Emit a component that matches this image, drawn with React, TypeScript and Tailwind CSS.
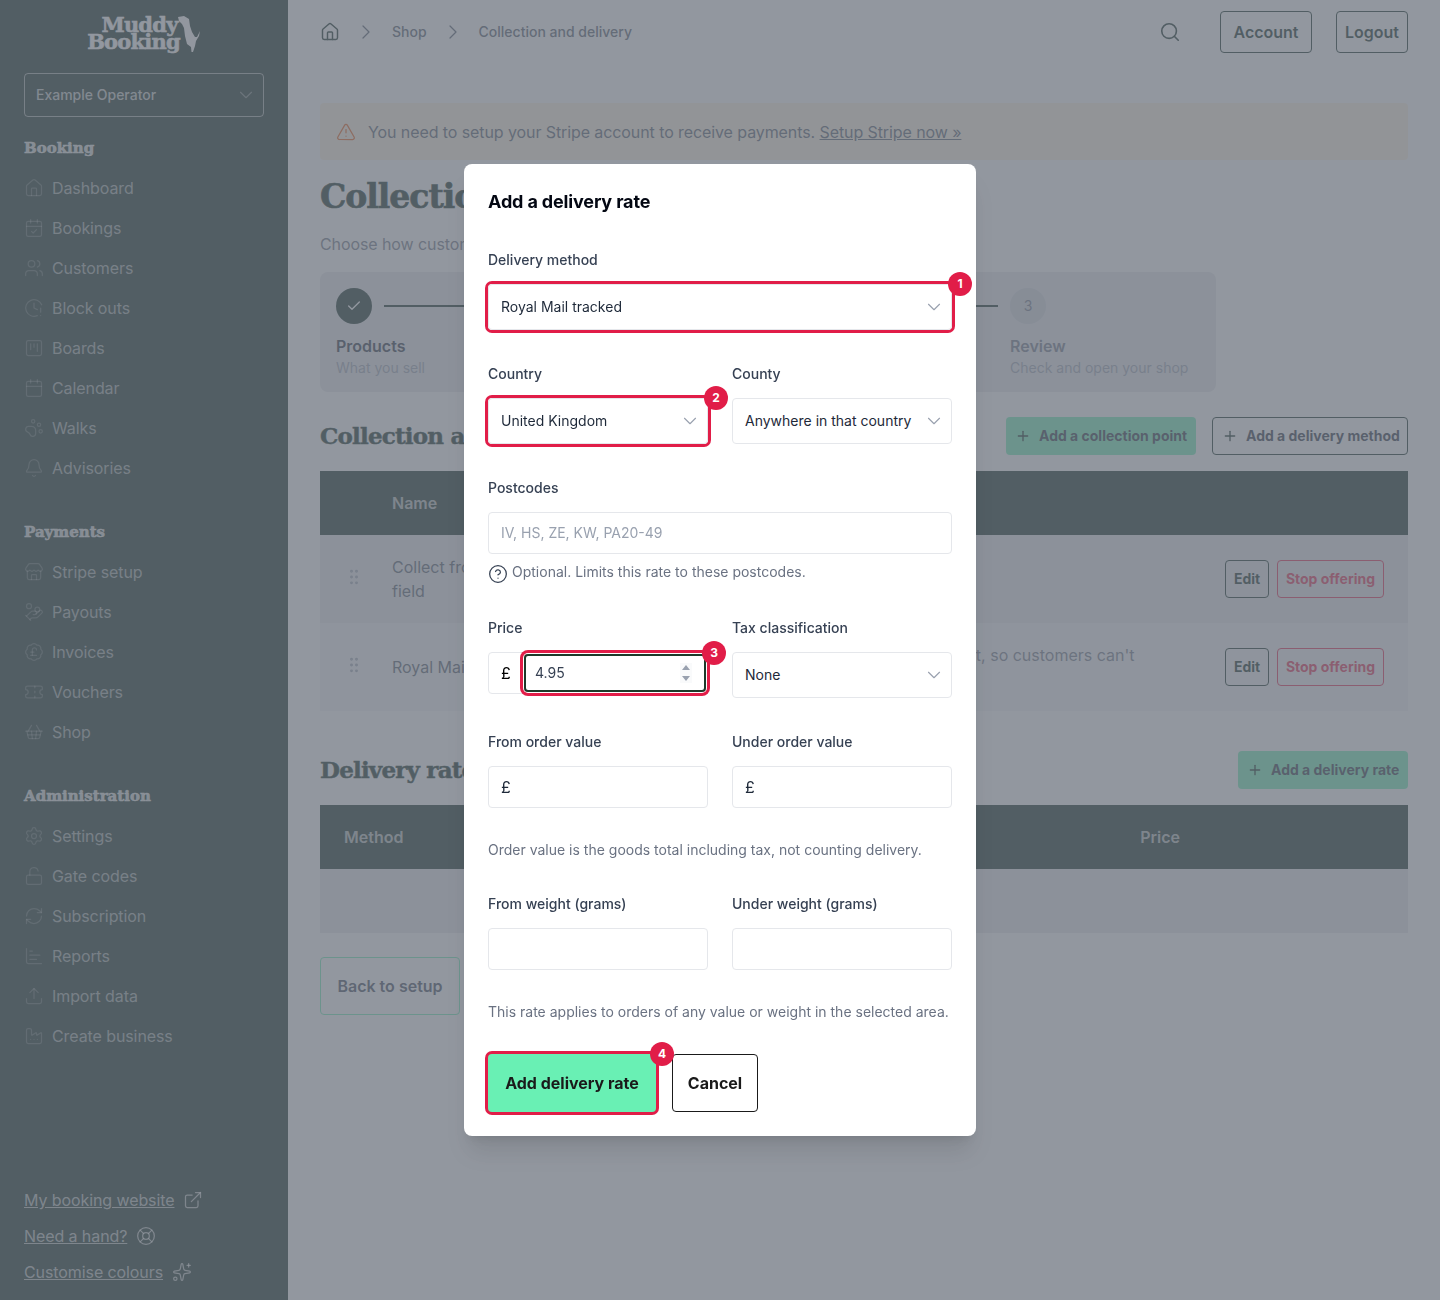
import React from "react";
import {
  House, CalendarCheck, Users, ClockAlert, SquareKanban, Calendar, PawPrint, Bell, Store, HandCoins,
  BadgePoundSterling, Ticket, ShoppingBasket, Settings, LockOpen, RefreshCw, ChartBar, Upload, Factory,
  ExternalLink, LifeBuoy, Sparkles, ChevronDown, ChevronRight, Search, TriangleAlert, Check,
  Plus, GripVertical, CircleHelp,
} from "lucide-react";

const booking = [
  { label: "Dashboard", icon: House },
  { label: "Bookings", icon: CalendarCheck },
  { label: "Customers", icon: Users },
  { label: "Block outs", icon: ClockAlert },
  { label: "Boards", icon: SquareKanban },
  { label: "Calendar", icon: Calendar },
  { label: "Walks", icon: PawPrint },
  { label: "Advisories", icon: Bell },
];
const payments = [
  { label: "Stripe setup", icon: Store },
  { label: "Payouts", icon: HandCoins },
  { label: "Invoices", icon: BadgePoundSterling },
  { label: "Vouchers", icon: Ticket },
  { label: "Shop", icon: ShoppingBasket },
];
const administration = [
  { label: "Settings", icon: Settings },
  { label: "Gate codes", icon: LockOpen },
  { label: "Subscription", icon: RefreshCw },
  { label: "Reports", icon: ChartBar },
  { label: "Import data", icon: Upload },
  { label: "Create business", icon: Factory },
];

const NavSection = ({ title, items, className = "" }: { title: string; items: typeof booking; className?: string }) => (
  <div className={className}>
    <h3 className="font-['DejaVu_Serif',serif] font-bold text-[15px] leading-6 h-6 mb-2 text-white/80 [-webkit-text-stroke:0.5px_currentColor]">{title}</h3>
    <ul>
      {items.map(({ label, icon: Icon }) => (
        <li key={label} className="flex items-center gap-2 h-10 text-white/60 tracking-[-0.09px]">
          <Icon size={20} strokeWidth={1.5} className="text-white/25" />
          <span>{label}</span>
        </li>
      ))}
    </ul>
  </div>
);

const Sidebar = () => (
  <aside className="w-72 shrink-0 bg-[#001c14] flex flex-col px-6 pb-4">
    <div className="h-[73px] flex justify-center">
      <div className="mt-4 font-['DejaVu_Serif',serif] font-bold text-white text-[21px] leading-[17px] text-center tracking-[-0.8px] [-webkit-text-stroke:0.5px_currentColor]">
        <div className="pl-[12px]">Muddy</div>
        <div>Booking</div>
      </div>
      <svg viewBox="0 0 24 36" className="w-6 h-9 mt-4 -ml-[3px] fill-white">
        <path d="M1 1 L7 0 L12 3 L13 10 L15 16 L18 21 L20 21 L23 15 L22 20 L19 25 L18 30 L16 36 L14.5 36 L14 31 L10 28 L8 20 L7 12 L5 8 L2 5 Z" />
      </svg>
    </div>
    <div className="h-11 border border-white/60 rounded flex items-center justify-between pl-[11px] pr-[6px] text-sm font-medium text-white/75">
      Example Operator
      <ChevronDown size={22} strokeWidth={1.25} className="text-white/40" />
    </div>
    <NavSection title="Booking" items={booking} className="mt-[19px]" />
    <NavSection title="Payments" items={payments} className="mt-8" />
    <NavSection title="Administration" items={administration} className="mt-8" />
    <div className="mt-auto flex flex-col gap-3 text-white/70 tracking-[-0.09px]">
      <a className="flex items-center gap-[9px] h-6"><span className="underline">My booking website</span><ExternalLink size={20} strokeWidth={1.5} /></a>
      <a className="flex items-center gap-[9px] h-6"><span className="underline">Need a hand?</span><LifeBuoy size={20} strokeWidth={1.5} /></a>
      <a className="flex items-center gap-[9px] h-6"><span className="underline">Customise colours</span><Sparkles size={20} strokeWidth={1.5} /></a>
    </div>
  </aside>
);

const Step = ({ title, text, number, last }: { title: string; text: string; number?: number; last?: boolean }) => (
  <div className={last ? "w-[190px]" : "flex-1"}>
    <div className="flex items-center gap-3">
      {number ? (
        <div className="w-9 h-9 rounded-full bg-gray-300 flex items-center justify-center text-sm text-gray-500">{number}</div>
      ) : (
        <div className="w-9 h-9 rounded-full bg-[#001c14] flex items-center justify-center text-white"><Check size={16} /></div>
      )}
      {!last && <div className="flex-1 h-0.5 bg-[#001c14] mr-3" />}
    </div>
    <div className={`mt-[10px] font-semibold leading-6 ${number ? "text-gray-500" : "text-gray-800"}`}>{title}</div>
    <div className="text-sm leading-5 text-gray-400">{text}</div>
  </div>
);

const RowButtons = () => (
  <div className="flex gap-2 text-sm font-bold">
    <button className="h-[38px] w-11 border border-[#001c14] rounded text-[#001c14]">Edit</button>
    <button className="h-[38px] w-[107px] border border-[#e11d48] rounded text-[#e11d48] whitespace-nowrap">Stop offering</button>
  </div>
);

const AddButton = ({ label, outline, width }: { label: string; outline?: boolean; width: string }) => (
  <button className={`h-[38px] ${width} flex items-center gap-2 px-[9px] rounded text-sm font-bold whitespace-nowrap text-gray-800 ${outline ? "border border-[#001c14]" : "bg-[#69f0b4]"}`}>
    <Plus size={16} className="text-[#001c14] shrink-0" /> {label}
  </button>
);

const Page = () => (
  <main className="flex-1 px-8 pt-[11px] bg-white">
    <header className="h-[42px] flex items-center">
      <div className="flex items-center gap-[14px] text-sm font-medium text-gray-600">
        <House size={20} strokeWidth={1.75} className="text-[#001c14]" />
        <ChevronRight size={24} strokeWidth={1.25} />
        <span>Shop</span>
        <ChevronRight size={24} strokeWidth={1.25} />
        <span>Collection and delivery</span>
      </div>
      <div className="ml-auto flex items-center font-semibold text-[#001c14]">
        <Search size={22} strokeWidth={1.75} className="mr-[39px]" />
        <button className="h-[42px] w-[92px] border border-[#001c14] rounded mr-6">Account</button>
        <button className="h-[42px] w-[72px] border border-[#001c14] rounded">Logout</button>
      </div>
    </header>
    <div className="mt-[50px] h-[57px] flex items-center gap-3 px-4 rounded bg-[#fff3e0] text-gray-600 tracking-[-0.09px]">
      <TriangleAlert size={20} strokeWidth={1.5} className="text-[#ea580c]" />
      <p>You need to setup your Stripe account to receive payments. <a className="underline">Setup Stripe now »</a></p>
    </div>
    <h1 className="mt-[17px] font-['DejaVu_Serif',serif] font-bold text-[33px] leading-10 tracking-[-1px] text-[#001c14] [-webkit-text-stroke:0.7px_currentColor]">Collection and delivery</h1>
    <p className="mt-[15px] leading-6 text-gray-500 tracking-[-0.09px]">Choose how customers get their orders from your shop.</p>
    <div className="mt-4 w-[896px] h-[120px] p-4 flex rounded-lg bg-gray-200">
      <Step title="Products" text="What you sell" />
      <Step title="Collection and delivery" text="How orders reach customers" number={2} />
      <Step title="Review" text="Check and open your shop" number={3} last />
    </div>
    <div className="mt-[25px] flex items-center justify-between">
      <h2 className="font-['DejaVu_Serif',serif] font-bold text-[23px] tracking-[-0.8px] text-[#001c14] [-webkit-text-stroke:0.5px_currentColor]">Collection and delivery</h2>
      <div className="flex gap-4">
        <AddButton label="Add a collection point" width="w-[190px]" />
        <AddButton label="Add a delivery method" outline width="w-[196px]" />
      </div>
    </div>
    <div className="mt-4">
      <div className="h-16 bg-[#001c14] flex items-center pl-[72px] font-semibold text-white/70">Name</div>
      <div className="h-[88px] bg-gray-200 flex items-center pl-6 pr-6 text-gray-600">
        <GripVertical size={20} strokeWidth={1.5} className="text-gray-400 -mt-1 mr-7" />
        <div className="w-[152px] leading-6">Collect from the field</div>
        <div className="ml-auto"><RowButtons /></div>
      </div>
      <div className="h-[88px] bg-gray-100 flex items-center pl-6 pr-6 text-gray-600">
        <GripVertical size={20} strokeWidth={1.5} className="text-gray-400 -mt-1 mr-7" />
        <div className="w-[152px] leading-6">Royal Mail tracked</div>
        <div className="ml-[131px] w-[470px] leading-6 text-gray-500">We post it out the day after you accept it, so customers can't<br />collect</div>
        <div className="ml-auto"><RowButtons /></div>
      </div>
    </div>
    <div className="mt-10 flex items-center justify-between">
      <h2 className="font-['DejaVu_Serif',serif] font-bold text-[23px] tracking-[-0.8px] text-[#001c14] [-webkit-text-stroke:0.5px_currentColor]">Delivery rates</h2>
      <AddButton label="Add a delivery rate" width="w-[170px]" />
    </div>
    <div className="mt-4">
      <div className="h-16 bg-[#001c14] flex items-center justify-between pl-6 pr-[228px] font-semibold text-white/70">
        <span>Method</span>
        <span>Price</span>
      </div>
      <div className="h-16 bg-gray-200" />
    </div>
    <button className="mt-6 h-[58px] w-[140px] border border-[#69f0b4] rounded font-semibold text-gray-700">Back to setup</button>
  </main>
);

const Badge = ({ n, className }: { n: number; className: string }) => (
  <span className={`absolute w-6 h-6 rounded-full bg-[#e11d48] text-white text-xs font-bold flex items-center justify-center ${className}`}>{n}</span>
);

const Label = ({ children }: { children: React.ReactNode }) => (
  <label className="block mb-[14px] text-sm leading-5 font-medium text-gray-700">{children}</label>
);

const fieldCls = "w-full border border-gray-200 rounded bg-white text-sm text-gray-800 px-3";

const Select = ({ value, children }: { value: string; children?: React.ReactNode }) => (
  <div className="relative h-[46px]">
    <select defaultValue={value} className={`${fieldCls} h-[46px] appearance-none`}>
      <option>{value}</option>
    </select>
    <ChevronDown size={22} strokeWidth={1.25} className="absolute right-[7px] top-3 text-gray-400" />
    {children}
  </div>
);

const Highlight = "ring-[3px] ring-[#e11d48] rounded";

const Pound = () => (
  <div className="w-full h-[42px] flex items-center border border-gray-200 rounded bg-white text-base text-gray-800 px-3">£</div>
);

const Modal = () => (
  <div className="fixed inset-0 bg-[#6e747f]/75 flex items-center justify-center">
    <div className="w-[512px] h-[972px] bg-white rounded-lg shadow-xl p-6">
      <h2 className="text-lg leading-7 font-bold tracking-[-0.15px] text-gray-950">Add a delivery rate</h2>
      <div className="mt-[34px] flex flex-col gap-[34px]">
        <div>
          <Label>Delivery method</Label>
          <div className={Highlight}>
            <Select value="Royal Mail tracked"><Badge n={1} className="-top-3 -right-5" /></Select>
          </div>
        </div>
        <div className="grid grid-cols-2 gap-6">
          <div>
            <Label>Country</Label>
            <div className={Highlight}>
              <Select value="United Kingdom"><Badge n={2} className="-top-3 -right-5" /></Select>
            </div>
          </div>
          <div>
            <Label>County</Label>
            <Select value="Anywhere in that country" />
          </div>
        </div>
        <div>
          <Label>Postcodes</Label>
          <input readOnly placeholder="IV, HS, ZE, KW, PA20-49" className={`${fieldCls} h-[42px] pb-[2px] placeholder:text-gray-400`} />
          <div className="mt-2 flex items-start gap-1 text-sm leading-5 text-gray-500 h-[22px]">
            <CircleHelp size={20} strokeWidth={1.5} className="mt-[2px] text-gray-700" />
            Optional. Limits this rate to these postcodes.
          </div>
        </div>
        <div className="grid grid-cols-2 gap-6">
          <div>
            <Label>Price</Label>
            <div className="relative h-[42px] flex items-center border border-gray-200 rounded pl-[12px] pr-[1px]">
              <span className="w-[23px]">£</span>
              <div className="relative flex-1 h-[38px] flex items-center justify-between pl-[9px] pr-[12px] border-2 border-[#1d3a2a] rounded-sm text-sm text-gray-700 shadow-[0_0_0_1px_white,0_0_0_4px_#e11d48]">
                4.95
                <svg viewBox="0 0 12 20" className="w-3 h-5 fill-gray-400 bg-gray-50">
                  <path d="M6 2 L10 7 H2 Z M6 18 L10 13 H2 Z" />
                </svg>
                <Badge n={3} className="-top-[15px] right-[-22px]" />
              </div>
            </div>
          </div>
          <div>
            <Label>Tax classification</Label>
            <Select value="None" />
          </div>
        </div>
      </div>
      <div className="mt-[34px] grid grid-cols-2 gap-6">
        <div><Label>From order value</Label><Pound /></div>
        <div><Label>Under order value</Label><Pound /></div>
      </div>
      <p className="mt-8 text-sm leading-5 text-gray-500">Order value is the goods total including tax, not counting delivery.</p>
      <div className="mt-[34px] grid grid-cols-2 gap-6">
        <div><Label>From weight (grams)</Label><input readOnly className={`${fieldCls} h-[42px]`} /></div>
        <div><Label>Under weight (grams)</Label><input readOnly className={`${fieldCls} h-[42px]`} /></div>
      </div>
      <p className="mt-8 text-sm leading-5 text-gray-500">This rate applies to orders of any value or weight in the selected area.</p>
      <div className="mt-8 flex gap-4 font-bold text-[#1a1a1a]">
        <button className={`relative h-[58px] w-[168px] bg-[#69f0b4] ${Highlight}`}>
          Add delivery rate
          <Badge n={4} className="-top-3 right-[-18px]" />
        </button>
        <button className="h-[58px] w-[86px] border border-[#1a1a1a] rounded">Cancel</button>
      </div>
    </div>
  </div>
);

export default function App() {
  return (
    <div className="relative flex min-h-[1300px] font-['Inter',sans-serif]">
      <Sidebar />
      <Page />
      <Modal />
    </div>
  );
}
